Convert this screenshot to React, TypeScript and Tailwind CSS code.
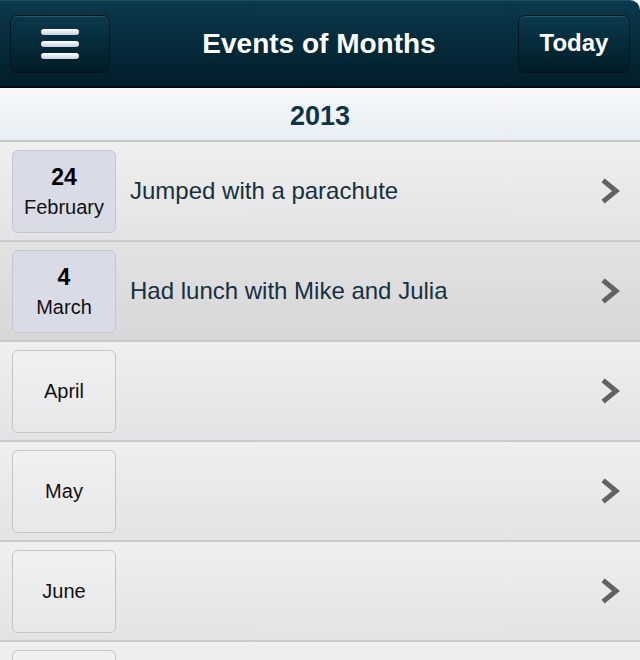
import React from "react";

type Row = { day?: string; month: string; text?: string; dark?: boolean };

const rows: Row[] = [
  { day: "24", month: "February", text: "Jumped with a parachute" },
  { day: "4", month: "March", text: "Had lunch with Mike and Julia", dark: true },
  { month: "April" },
  { month: "May" },
  { month: "June" },
  { month: "" },
];

function Chevron() {
  return (
    <svg width="24" height="28" viewBox="0 0 24 28" className="shrink-0">
      <path d="M5 5 L16 14 L5 23" fill="none" stroke="#626262" strokeWidth="5" strokeLinecap="square" strokeLinejoin="miter" />
    </svg>
  );
}

export default function App() {
  const font = { fontFamily: '"Liberation Sans", Arial, sans-serif' };
  return (
    <div className="w-[640px] h-[660px] overflow-hidden bg-white" style={font}>
      <header className="h-[88px] rounded-tr-[10px] border-t border-[#1e4c5f] border-b-2 border-b-[#010d12] bg-gradient-to-b from-[#0b3a4d] to-[#021d29] flex items-center justify-between px-[10px]">
        <button className="w-[100px] h-[58px] rounded-[7px] border border-[#01141c] bg-gradient-to-b from-[#0b3a4d] to-[#021c27] shadow-[inset_0_1px_0_rgba(255,255,255,0.12)] flex flex-col items-center justify-center gap-[6px]">
          <span className="block w-[38px] h-[6px] rounded-[3px] bg-gradient-to-b from-white to-[#c9d0dc]" />
          <span className="block w-[38px] h-[6px] rounded-[3px] bg-gradient-to-b from-white to-[#c9d0dc]" />
          <span className="block w-[38px] h-[6px] rounded-[3px] bg-gradient-to-b from-white to-[#c9d0dc]" />
        </button>
        <h1 className="ml-[10px] text-white font-bold text-[28px] leading-none">Events of Months</h1>
        <button className="w-[112px] h-[58px] rounded-[7px] border border-[#01141c] bg-gradient-to-b from-[#0b3a4d] to-[#021c27] shadow-[inset_0_1px_0_rgba(255,255,255,0.12)] text-white font-bold text-[24px] leading-none pb-[2px]">
          Today
        </button>
      </header>
      <div className="h-[54px] bg-gradient-to-b from-[#f6f8fa] to-[#e9eef4] border-b-2 border-[#c9c9c9] flex items-center justify-center pt-[5px]">
        <span className="text-[#0e3547] font-bold text-[27px] leading-none">2013</span>
      </div>
      {rows.map((r, i) => (
        <div
          key={i}
          className={
            "h-[100px] border-b-2 border-[#cbcbcb] flex items-center pl-[12px] pr-[16px] " +
            (r.dark
              ? "bg-gradient-to-b from-[#e2e2e2] to-[#d7d7d9]"
              : "bg-gradient-to-b from-[#efefef] to-[#e3e3e5]")
          }
        >
          <div
            className={
              "w-[104px] h-[83px] rounded-[6px] border flex flex-col items-center justify-center shrink-0 " +
              (r.day
                ? "bg-[#d9dce6] border-[#c4c7d1]"
                : "bg-gradient-to-b from-[#f0f0f0] to-[#e8e8ea] border-[#c4c4c4]")
            }
          >
            {r.day && <span className="text-black font-bold text-[23px] leading-none mb-[8px]">{r.day}</span>}
            {r.month && <span className="text-[#111] text-[20px] leading-none">{r.month}</span>}
          </div>
          <div className="flex-1 pl-[14px] text-[#15313f] text-[24px] leading-none">{r.text}</div>
          <Chevron />
        </div>
      ))}
    </div>
  );
}
